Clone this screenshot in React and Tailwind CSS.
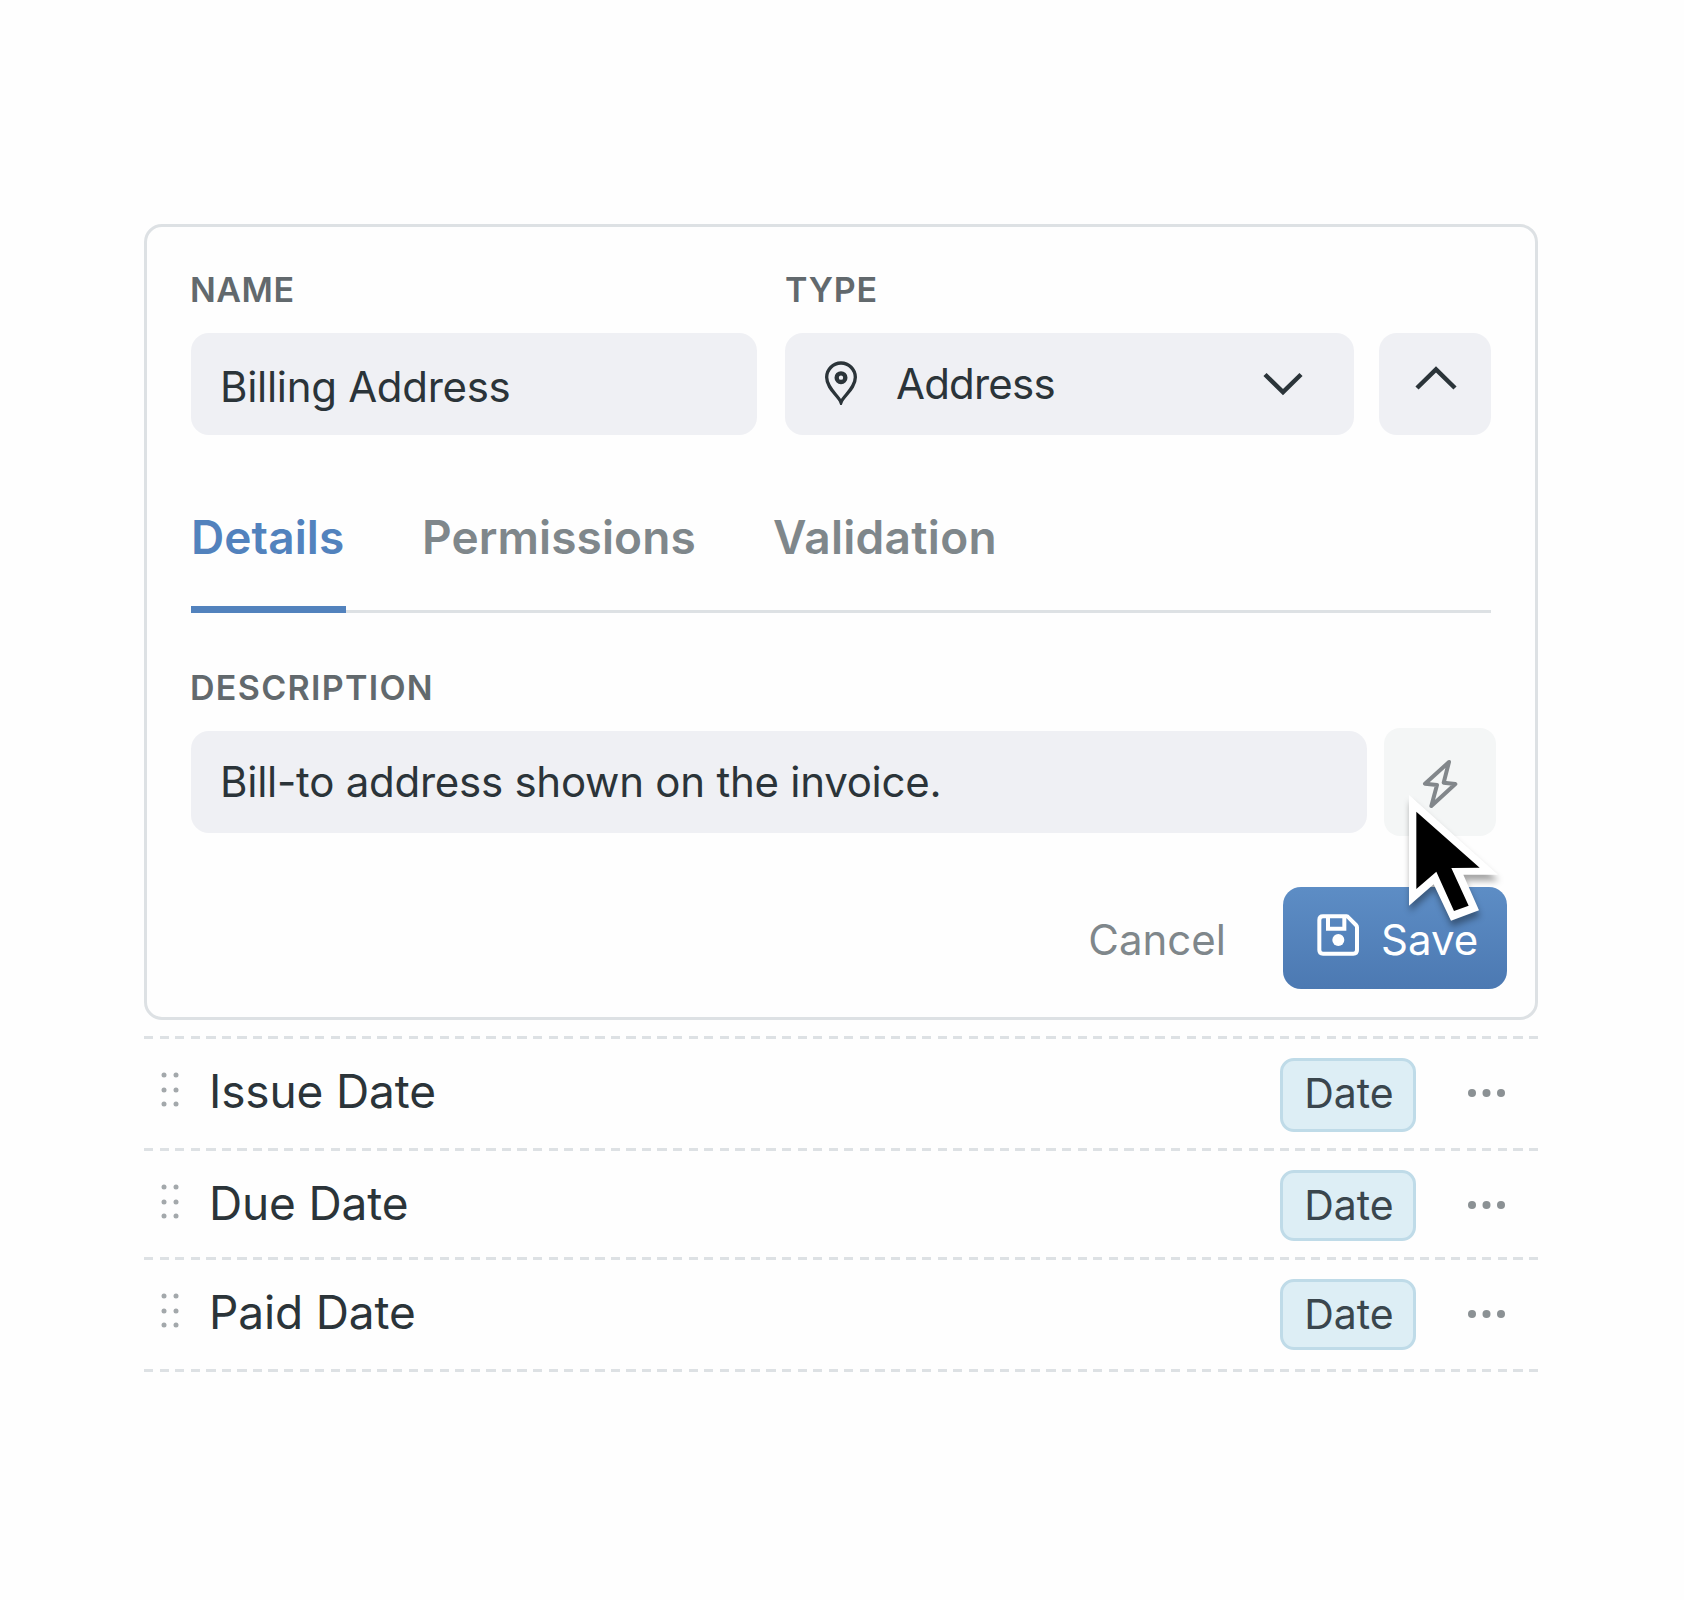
import React from 'react';

const rows = [
    {name: 'Issue Date', type: 'Date', height: 'h-[109px]', pill: 'h-[74px]'},
    {name: 'Due Date', type: 'Date', height: 'h-[106px]', pill: 'h-[71px]'},
    {name: 'Paid Date', type: 'Date', height: 'h-[109px]', pill: 'h-[71px]'},
];

function PinIcon() {
    return (
        <svg className="w-8 h-11 -mt-0.5" viewBox="195 301 96 132" fill="none" stroke="#2b3439" strokeWidth="10">
            <path d="M243 425C236 406 200 383 200 350a43 43 0 0 1 86 0c0 33-36 56-43 75Z"/>
            <circle cx="243" cy="351" r="13" strokeWidth="13"/>
        </svg>
    );
}

function BoltIcon() {
    return (
        <svg className="w-9 h-[50px]" viewBox="516 177 108 150" fill="none" stroke="#82878b" strokeWidth="12"
             strokeLinejoin="round">
            <path d="M597 186 525 251l36 4-17 63 72-66-35-4Z"/>
        </svg>
    );
}

function SaveIcon() {
    return (
        <svg className="w-[42px] h-[42px]" viewBox="201 642 126 126" fill="none" stroke="#fff" strokeWidth="12">
            <path d="M290 649h-71q-11 0-11 11v90q0 11 11 11h91q11 0 11-11v-68q0-4-3-7l-23-23q-2-3-5-3Z"/>
            <path d="M234 650v36h49v-36"/>
            <circle cx="265" cy="720" r="18" fill="#fff" stroke="none"/>
        </svg>
    );
}

function Cursor() {
    return (
        <svg className="absolute left-[25px] top-[67px] w-[90px] h-[126px] overflow-visible drop-shadow-[1px_6px_3px_rgba(0,0,0,0.35)]"
             viewBox="478 285 270 378">
            <path fill="#fff" d="M478 285V617L552 553 604 662 688 631 641 524H745Z"/>
            <path fill="#000" d="M500 335V567L560 515 613 633 657 617 605 504 690 503Z"/>
        </svg>
    );
}

function Divider() {
    return (
        <div className="h-[3px] bg-[repeating-linear-gradient(90deg,#dde1e4_0_9.3px,transparent_9.3px_15.56px)]"></div>
    );
}

function App() {
    return (
        <div className="w-[1684px] h-[1600px] bg-[#fefefe] pt-56 pl-36 font-['Inter',sans-serif] text-[#2b3439] whitespace-nowrap">
            <div className="w-[1394px]">
                <div className="h-[796px] border-3 border-[#dde1e4] rounded-[18px] px-11 pt-[42px]">
                    <div className="flex">
                        <div className="w-[566px] mr-7">
                            <div className="-ml-px text-[34px] leading-[42px] font-semibold tracking-[0.5px] text-[#62696d]">NAME</div>
                            <div className="mt-[22px] h-[102px] rounded-[18px] bg-[#eff0f4] pl-[29px] text-[42px] leading-[107px] tracking-[-0.3px]">
                                Billing Address
                            </div>
                        </div>
                        <div className="w-[569px] mr-[25px]">
                            <div className="text-[34px] leading-[42px] font-semibold tracking-[0.8px] text-[#62696d]">TYPE</div>
                            <div className="mt-[22px] h-[102px] rounded-[18px] bg-[#eff0f4] flex items-center pl-10 pr-[51px]">
                                <PinIcon/>
                                <span className="ml-[39px] text-[42px] leading-[99px] pb-px tracking-[-0.8px]">Address</span>
                                <svg className="ml-auto -mt-0.5 w-[40px] h-[26px]" viewBox="0 0 40 26" fill="none" stroke="#2b3439" strokeWidth="4.5">
                                    <path d="M2 4.500 20 22 38 4.500"/>
                                </svg>
                            </div>
                        </div>
                        <button className="mt-16 w-28 h-[102px] rounded-[18px] bg-[#eff0f4] flex justify-center items-center pb-3 pl-0.5">
                            <svg className="w-[44px] h-[26px]" viewBox="0 0 44 26" fill="none" stroke="#2b3439" strokeWidth="4.5">
                                <path d="M3 23 22 4.500 41 23"/>
                            </svg>
                        </button>
                    </div>
                    <div className="mt-[74px] h-[104px] flex border-b-3 border-[#dde1e4] text-[46px] leading-[56px] font-semibold text-[#7f878b]">
                        <div className="w-[155px] h-[104px] mr-[76px] border-b-[7px] border-[#5282bd] text-[#5282bd] tracking-[0.1px]">
                            Details
                        </div>
                        <div className="w-[351px] tracking-[0.1px]">Permissions</div>
                        <div className="tracking-[0.3px]">Validation</div>
                    </div>
                    <div className="-ml-px mt-[54px] text-[34px] leading-[42px] font-semibold tracking-[1.300px] text-[#62696d]">DESCRIPTION</div>
                    <div className="mt-[19px] -mr-[5px] flex justify-between items-center">
                        <div className="w-[1176px] h-[102px] rounded-[18px] bg-[#eff0f4] pl-[29px] text-[42px] leading-[101px] tracking-[-0.25px]">
                            Bill-to address shown on the invoice.
                        </div>
                        <button className="relative w-28 h-[108px] rounded-2xl bg-[#f4f6f6] flex justify-center items-center pt-1">
                            <BoltIcon/>
                            <Cursor/>
                        </button>
                    </div>
                    <div className="mt-[51px] -mr-4 flex justify-end">
                        <button className="mr-[57px] text-[42px] leading-[105px] text-[#7f878b]">Cancel</button>
                        <button className="w-[224px] h-[102px] rounded-[18px] bg-linear-to-b from-[#5d8dc5] to-[#4c79b2] flex items-center pl-[34px] text-[42px] text-white">
                            <span className="mr-[22px] -mt-1.5"><SaveIcon/></span>
                            <span className="pt-0.5">Save</span>
                        </button>
                    </div>
                </div>
                <div className="mt-4">
                    <Divider/>
                    {rows.map((row) => (
                        <div key={row.name}>
                            <div className={`flex items-start pt-[19px] pl-[17px] pr-8 ${row.height}`}>
                                <svg className="mt-[13px] w-[18px] h-[36px]" viewBox="0 0 18 36" fill="#a3a8ab">
                                    <circle cx="3" cy="4" r="2.500"/>
                                    <circle cx="15" cy="4" r="2.500"/>
                                    <circle cx="3" cy="19" r="2.500"/>
                                    <circle cx="15" cy="19" r="2.500"/>
                                    <circle cx="3" cy="33" r="2.500"/>
                                    <circle cx="15" cy="33" r="2.500"/>
                                </svg>
                                <span className="ml-[30px] text-[46px] leading-[67px] tracking-[-0.15px]">{row.name}</span>
                                <span className={`ml-auto w-[136px] rounded-[14px] border-3 border-[#bfdbe8] bg-[#ddeef5] pl-0.5 text-[41px] leading-[64px] text-center text-[#3a464d] ${row.pill}`}>
                                    {row.type}
                                </span>
                                <svg className="ml-[51px] mt-[30px] w-[39px] h-[10px]" viewBox="0 0 39 10" fill="#8b9194">
                                    <circle cx="5" cy="5" r="4"/>
                                    <circle cx="19.500" cy="5" r="4"/>
                                    <circle cx="34" cy="5" r="4"/>
                                </svg>
                            </div>
                            <Divider/>
                        </div>
                    ))}
                </div>
            </div>
        </div>
    );
}

export default App;
